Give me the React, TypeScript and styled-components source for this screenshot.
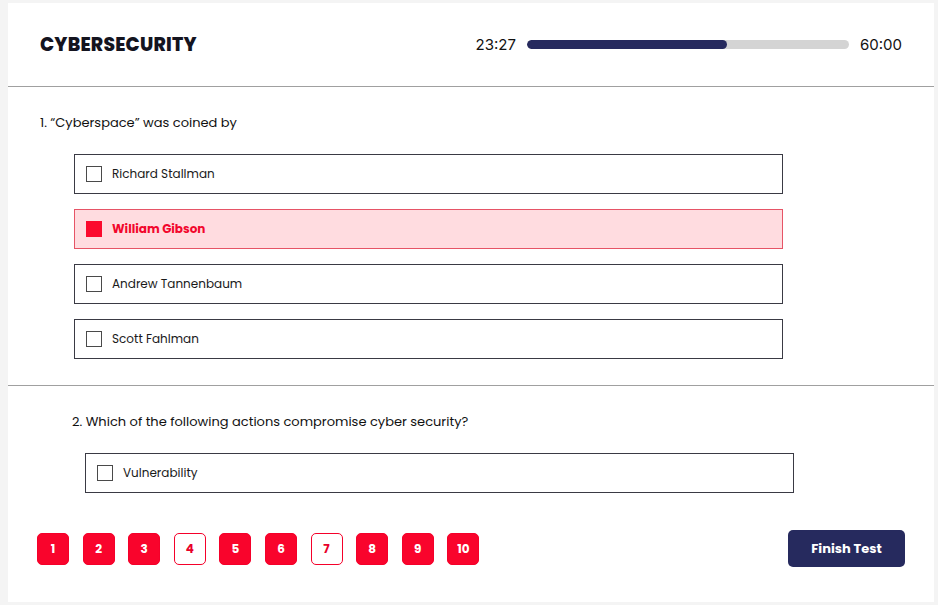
import React from "react";
import styled, { createGlobalStyle } from "styled-components";

const Global = createGlobalStyle`
  html, body { margin: 0; padding: 0; background: #f4f4f4; }
  body { font-family: "Poppins", "Open Sans", "Noto Sans", sans-serif; color: #111; }
  * { box-sizing: border-box; }
`;

const Page = styled.div`
  padding: 3px 4px 3px 8px;
  width: 938px;
  height: 605px;
`;

const Card = styled.div`
  background: #fff;
  width: 926px;
  height: 599px;
  display: flex;
  flex-direction: column;
`;

const Header = styled.header`
  height: 84px;
  padding: 0 32px;
  display: flex;
  align-items: center;
  justify-content: space-between;
  border-bottom: 1px solid #a0a0a0;
`;

const Title = styled.h1`
  margin: 0;
  font-size: 18.7px;
  font-weight: 800;
  letter-spacing: 0.2px;
  color: #14141f;
`;

const Timer = styled.div`
  display: flex;
  align-items: center;
  gap: 11px;
  font-family: "Inter", "Liberation Sans", sans-serif;
  font-size: 15px;
  color: #111;
`;

const Track = styled.div`
  width: 322px;
  height: 9px;
  border-radius: 5px;
  background: #d4d4d4;
  overflow: hidden;
`;

const Fill = styled.div`
  height: 100%;
  border-radius: 5px;
  background: #262a5e;
`;

const Section = styled.section<{ $indent: number; $optIndent: number; $bottom?: boolean }>`
  padding: 27px 0 ${(p) => (p.$bottom ? 26 : 0)}px ${(p) => p.$indent}px;
  border-bottom: ${(p) => (p.$bottom ? "1px solid #a0a0a0" : "none")};
  display: flex;
  flex-direction: column;

  & > ul {
    margin: 22px 0 0 ${(p) => p.$optIndent}px;
  }
`;

const Question = styled.p`
  margin: 0;
  font-size: 13px;
  line-height: 18px;
  color: #111;
`;

const Options = styled.ul`
  list-style: none;
  padding: 0;
  display: flex;
  flex-direction: column;
  gap: 15px;
`;

const Option = styled.li<{ $selected?: boolean }>`
  width: 709px;
  height: 40px;
  display: flex;
  align-items: center;
  gap: 10px;
  padding: 0 11px;
  border: 1px solid ${(p) => (p.$selected ? "#e65466" : "#3a3a44")};
  background: ${(p) => (p.$selected ? "#ffdce0" : "#fff")};
  color: ${(p) => (p.$selected ? "#f2072d" : "#1a1a1a")};
  font-size: 12px;
  font-weight: ${(p) => (p.$selected ? 700 : 400)};
`;

const Box = styled.span<{ $checked?: boolean }>`
  width: 16px;
  height: 16px;
  flex: none;
  border: ${(p) => (p.$checked ? "none" : "1.5px solid #4a4a4a")};
  background: ${(p) => (p.$checked ? "#fb0a2e" : "#fff")};
`;

const Footer = styled.footer`
  margin-top: auto;
  padding: 0 29px 35px;
  display: flex;
  align-items: center;
  justify-content: space-between;
`;

const Pages = styled.nav`
  display: flex;
  gap: 13.6px;
`;

const PageBtn = styled.button<{ $outline?: boolean }>`
  width: 32px;
  height: 32px;
  border-radius: 5px;
  border: 1px solid #f5002a;
  background: ${(p) => (p.$outline ? "#fff" : "#f9042c")};
  color: ${(p) => (p.$outline ? "#e8002a" : "#fff")};
  font-family: inherit;
  font-size: 12px;
  font-weight: 700;
  padding: 0;
  display: flex;
  align-items: center;
  justify-content: center;
`;

const Finish = styled.button`
  width: 117px;
  height: 37px;
  border: none;
  border-radius: 5px;
  background: #262a5e;
  color: #fff;
  font-family: inherit;
  font-size: 13px;
  font-weight: 700;
`;

const q1 = ["Richard Stallman", "William Gibson", "Andrew Tannenbaum", "Scott Fahlman"];
const outlined = [4, 7];

export default function App() {
  return (
    <Page>
      <Global />
      <Card>
        <Header>
          <Title>CYBERSECURITY</Title>
          <Timer>
            <span>23:27</span>
            <Track>
              <Fill style={{ width: `${(200 / 322) * 100}%` }} />
            </Track>
            <span>60:00</span>
          </Timer>
        </Header>
        <Section $indent={32} $optIndent={34} $bottom>
          <Question>1. “Cyberspace” was coined by</Question>
          <Options>
            {q1.map((o, i) => (
              <Option key={o} $selected={i === 1}>
                <Box $checked={i === 1} />
                {o}
              </Option>
            ))}
          </Options>
        </Section>
        <Section $indent={64} $optIndent={13}>
          <Question>2. Which of the following actions compromise cyber security?</Question>
          <Options>
            <Option>
              <Box />
              Vulnerability
            </Option>
          </Options>
        </Section>
        <Footer>
          <Pages>
            {Array.from({ length: 10 }, (_, i) => i + 1).map((n) => (
              <PageBtn key={n} $outline={outlined.includes(n)}>
                {n}
              </PageBtn>
            ))}
          </Pages>
          <Finish>Finish Test</Finish>
        </Footer>
      </Card>
    </Page>
  );
}
